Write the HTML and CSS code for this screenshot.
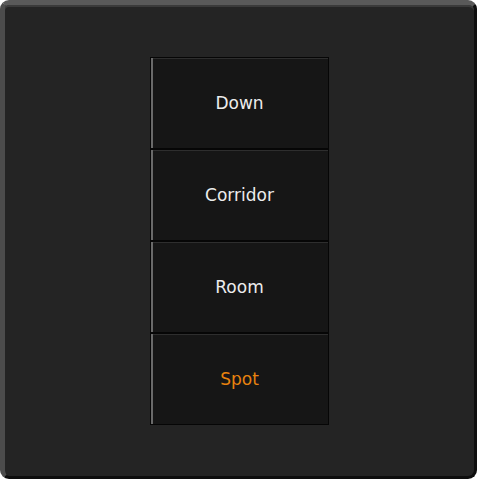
FILE: index.html
```html
<!DOCTYPE html>
<html lang="en">
<head>
    <meta charset="UTF-8">
    <meta name="viewport" content="width=device-width, initial-scale=1.0">
    <title>Light Switch</title>
    <link rel="stylesheet" href="styles.css">
</head>
<body>

    <div class="panel">
        <div class="keys">
            <div class="key">Down</div>
            <div class="key">Corridor</div>
            <div class="key">Room</div>
            <div class="key active">Spot</div>
        </div>
    </div>

</body>
</html>
```

FILE: styles.css
```css
* {
    margin: 0;
    padding: 0;
    box-sizing: border-box;
    font-family: 'DejaVu Sans', Verdana, sans-serif;
}

body {
    background-color: #ffffff;
    width: 480px;
    height: 481px;
}

.panel {
    width: 477px;
    height: 479px;
    background: #242424;
    border-radius: 9px;
    border-top: 5px solid #595959;
    border-left: 5px solid #4c4c4c;
    border-right: 3px solid #0e0e0e;
    border-bottom: 3px solid #0e0e0e;
    box-shadow: inset 0 2px 0 #3a3a3a;
    display: flex;
    justify-content: center;
    align-items: center;
}

.keys {
    width: 179px;
    display: flex;
    flex-direction: column;
    margin-top: 1px;
}

.key {
    height: 92px;
    background: #161616;
    border: 1px solid #060606;
    box-shadow: inset 2px 0 0 #6a6a6a, inset 0 1px 0 #2e2e2e;
    color: #ececec;
    font-size: 17px;
    display: flex;
    justify-content: center;
    align-items: center;
}

.key.active {
    color: #e8820e;
}
```
